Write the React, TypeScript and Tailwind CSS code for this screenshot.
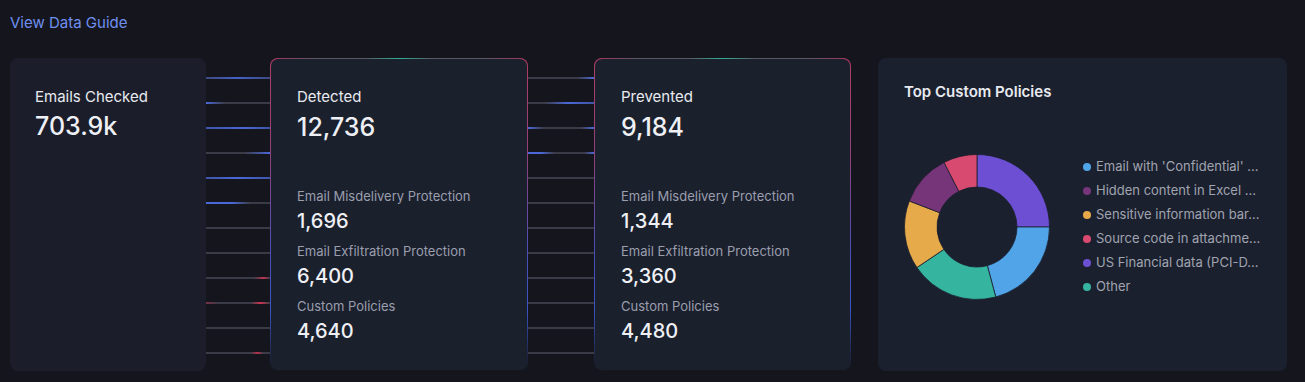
import React from "react";

const slices = [
  { from: 0, to: 90, color: "#6c4fd3" },
  { from: 90, to: 165, color: "#50a4e7" },
  { from: 165, to: 236, color: "#35b59f" },
  { from: 236, to: 291, color: "#e7aa4b" },
  { from: 291, to: 333, color: "#763579" },
  { from: 333, to: 360, color: "#d84a70" },
];

// labels are already shortened the way the chart legend shows them
const legend = [
  { label: "Email with 'Confidential' ...", dot: "bg-[#50a4e7]" },
  { label: "Hidden content in Excel ...", dot: "bg-[#763579]" },
  { label: "Sensitive information bar...", dot: "bg-[#e7aa4b]" },
  { label: "Source code in attachme...", dot: "bg-[#d84a70]" },
  { label: "US Financial data (PCI-D...", dot: "bg-[#6c4fd3]" },
  { label: "Other", dot: "bg-[#35b59f]" },
];

// connector lines between the funnel cards
const leftLines = [
  "bg-[linear-gradient(90deg,#3d4a80,#4560c8_50%,#3d4a80)]",
  "bg-[linear-gradient(90deg,#4a68d8,#3a3b46_30%,#3a3b46)]",
  "bg-[linear-gradient(90deg,#3f55a8,#4a68d8_60%,#3f55a8)]",
  "bg-[linear-gradient(90deg,#3a3b46,#3a3b46_60%,#4a68d8)]",
  "bg-[linear-gradient(90deg,#3f55a8,#4a68d8_50%,#3f55a8)]",
  "bg-[linear-gradient(90deg,#4a68d8,#4a68d8_40%,#3a3b46_70%)]",
  "bg-[#3a3b46]",
  "bg-[#3a3b46]",
  "bg-[linear-gradient(90deg,#3a3b46,#3a3b46_75%,#c0344f_90%,#3a3b46)]",
  "bg-[linear-gradient(90deg,#7a2f45,#3a3b46_20%,#3a3b46_70%,#d03452_85%,#3a3b46)]",
  "bg-[#3a3b46]",
  "bg-[linear-gradient(90deg,#3a3b46,#3a3b46_70%,#b8324d_80%,#3a3b46_90%)]",
];

const rightLines = [
  "bg-[linear-gradient(90deg,#3a3b46,#3a3b46_75%,#4a68d8)]",
  "bg-[linear-gradient(90deg,#3a3b46,#3a3b46_25%,#4a68d8_60%,#3f55a8)]",
  "bg-[linear-gradient(90deg,#4a68d8,#3a3b46_25%,#3a3b46_80%,#4a68d8)]",
  "bg-[linear-gradient(90deg,#4a68d8,#4a68d8_20%,#3a3b46_40%,#3a3b46_85%,#4a68d8)]",
  "bg-[#3a3b46]",
  "bg-[#3a3b46]",
  "bg-[#3a3b46]",
  "bg-[#3a3b46]",
  "bg-[#3a3b46]",
  "bg-[#3a3b46]",
  "bg-[#3a3b46]",
  "bg-[#3a3b46]",
];

function arcPath(cx: number, cy: number, r1: number, r2: number, a0: number, a1: number) {
  const rad = (a: number) => ((a - 90) * Math.PI) / 180;
  const p = (r: number, a: number) => [cx + r * Math.cos(rad(a)), cy + r * Math.sin(rad(a))];
  const large = a1 - a0 > 180 ? 1 : 0;
  const [x0, y0] = p(r2, a0);
  const [x1, y1] = p(r2, a1);
  const [x2, y2] = p(r1, a1);
  const [x3, y3] = p(r1, a0);
  return `M${x0} ${y0} A${r2} ${r2} 0 ${large} 1 ${x1} ${y1} L${x2} ${y2} A${r1} ${r1} 0 ${large} 0 ${x3} ${y3} Z`;
}

function Connector({ lines, width }: { lines: string[]; width: string }) {
  return (
    <div className={`${width} flex flex-col gap-[23px] pt-[19px] shrink-0`}>
      {lines.map((c, i) => (
        <div key={i} className={`h-[2px] w-full ${c}`} />
      ))}
    </div>
  );
}

function StageCard({
  title,
  total,
  rows,
  width,
}: {
  title: string;
  total: string;
  rows: { label: string; value: string }[];
  width: string;
}) {
  return (
    <div
      className={`${width} relative shrink-0 rounded-lg p-px bg-[linear-gradient(180deg,#b03c64_0%,#94407a_30%,#4a4fb8_62%,#3a55c8_80%,rgba(58,85,200,0)_100%)]`}
    >
      <div className="absolute left-2 right-2 top-0 h-px bg-[linear-gradient(90deg,#9a3a5e_0%,#5a5663_15%,#5a5663_36%,#2fb095_50%,#5a5663_64%,#5a5663_85%,#9a3a5e_100%)]" />
      <div className="h-full rounded-[7px] bg-[#1b202d] pl-[26px] pt-[28px]">
        <p className="text-[15px] leading-[20px] text-[#e8eaf0]">{title}</p>
        <p className="mt-[4px] text-[25px] leading-[32px] font-medium text-[#eef0f5]">{total}</p>
        <div className="mt-[44px] flex flex-col gap-[7px]">
          {rows.map((r) => (
            <div key={r.label}>
              <p className="text-[13px] leading-[18px] text-[#9a9ead]">{r.label}</p>
              <p className="mt-[2px] text-[20px] leading-[28px] font-medium text-[#eef0f5]">{r.value}</p>
            </div>
          ))}
        </div>
      </div>
    </div>
  );
}

export default function App() {
  return (
    <div className="w-[1305px] h-[382px] bg-[#15161d] font-['Inter',sans-serif] overflow-hidden">
      <div className="h-[58px] px-[10px] pt-[10px]">
        <a className="text-[15px] leading-[20px] text-[#6f8ff0] cursor-pointer">View Data Guide</a>
      </div>

      <div className="flex h-[313px] pl-[10px]">
        <div className="w-[196px] shrink-0 rounded-lg bg-[#1b1e2a] pl-[25px] pt-[29px]">
          <p className="text-[15px] leading-[20px] text-[#e8eaf0]">Emails Checked</p>
          <p className="mt-[3px] text-[25px] leading-[32px] font-medium text-[#eef0f5]">703.9k</p>
        </div>

        <Connector lines={leftLines} width="w-[64px]" />

        <StageCard
          width="w-[258px]"
          title="Detected"
          total="12,736"
          rows={[
            { label: "Email Misdelivery Protection", value: "1,696" },
            { label: "Email Exfiltration Protection", value: "6,400" },
            { label: "Custom Policies", value: "4,640" },
          ]}
        />

        <Connector lines={rightLines} width="w-[66px]" />

        <StageCard
          width="w-[257px]"
          title="Prevented"
          total="9,184"
          rows={[
            { label: "Email Misdelivery Protection", value: "1,344" },
            { label: "Email Exfiltration Protection", value: "3,360" },
            { label: "Custom Policies", value: "4,480" },
          ]}
        />

        <div className="w-[27px] shrink-0" />

        <div className="w-[409px] shrink-0 rounded-lg bg-[#1b202e] pl-[26px] pt-[24px]">
          <p className="text-[15px] leading-[20px] font-semibold text-[#e8eaf0]">Top Custom Policies</p>
          <div className="mt-[52px] flex items-center">
            <svg width="146" height="146" viewBox="0 0 146 146" className="shrink-0">
              {slices.map((s) => (
                <path
                  key={s.from}
                  d={arcPath(73, 73, 40, 72.5, s.from, s.to)}
                  fill={s.color}
                  stroke="#1b202e"
                  strokeWidth="0.8"
                />
              ))}
            </svg>
            <ul className="ml-[33px] flex flex-col">
              {legend.map((l) => (
                <li key={l.label} className="flex items-center h-[24px]">
                  <span className={`w-[8px] h-[8px] rounded-full shrink-0 ${l.dot}`} />
                  <span className="ml-[5px] whitespace-nowrap text-[13px] text-[#a0a4b0]">{l.label}</span>
                </li>
              ))}
            </ul>
          </div>
        </div>
      </div>
    </div>
  );
}
